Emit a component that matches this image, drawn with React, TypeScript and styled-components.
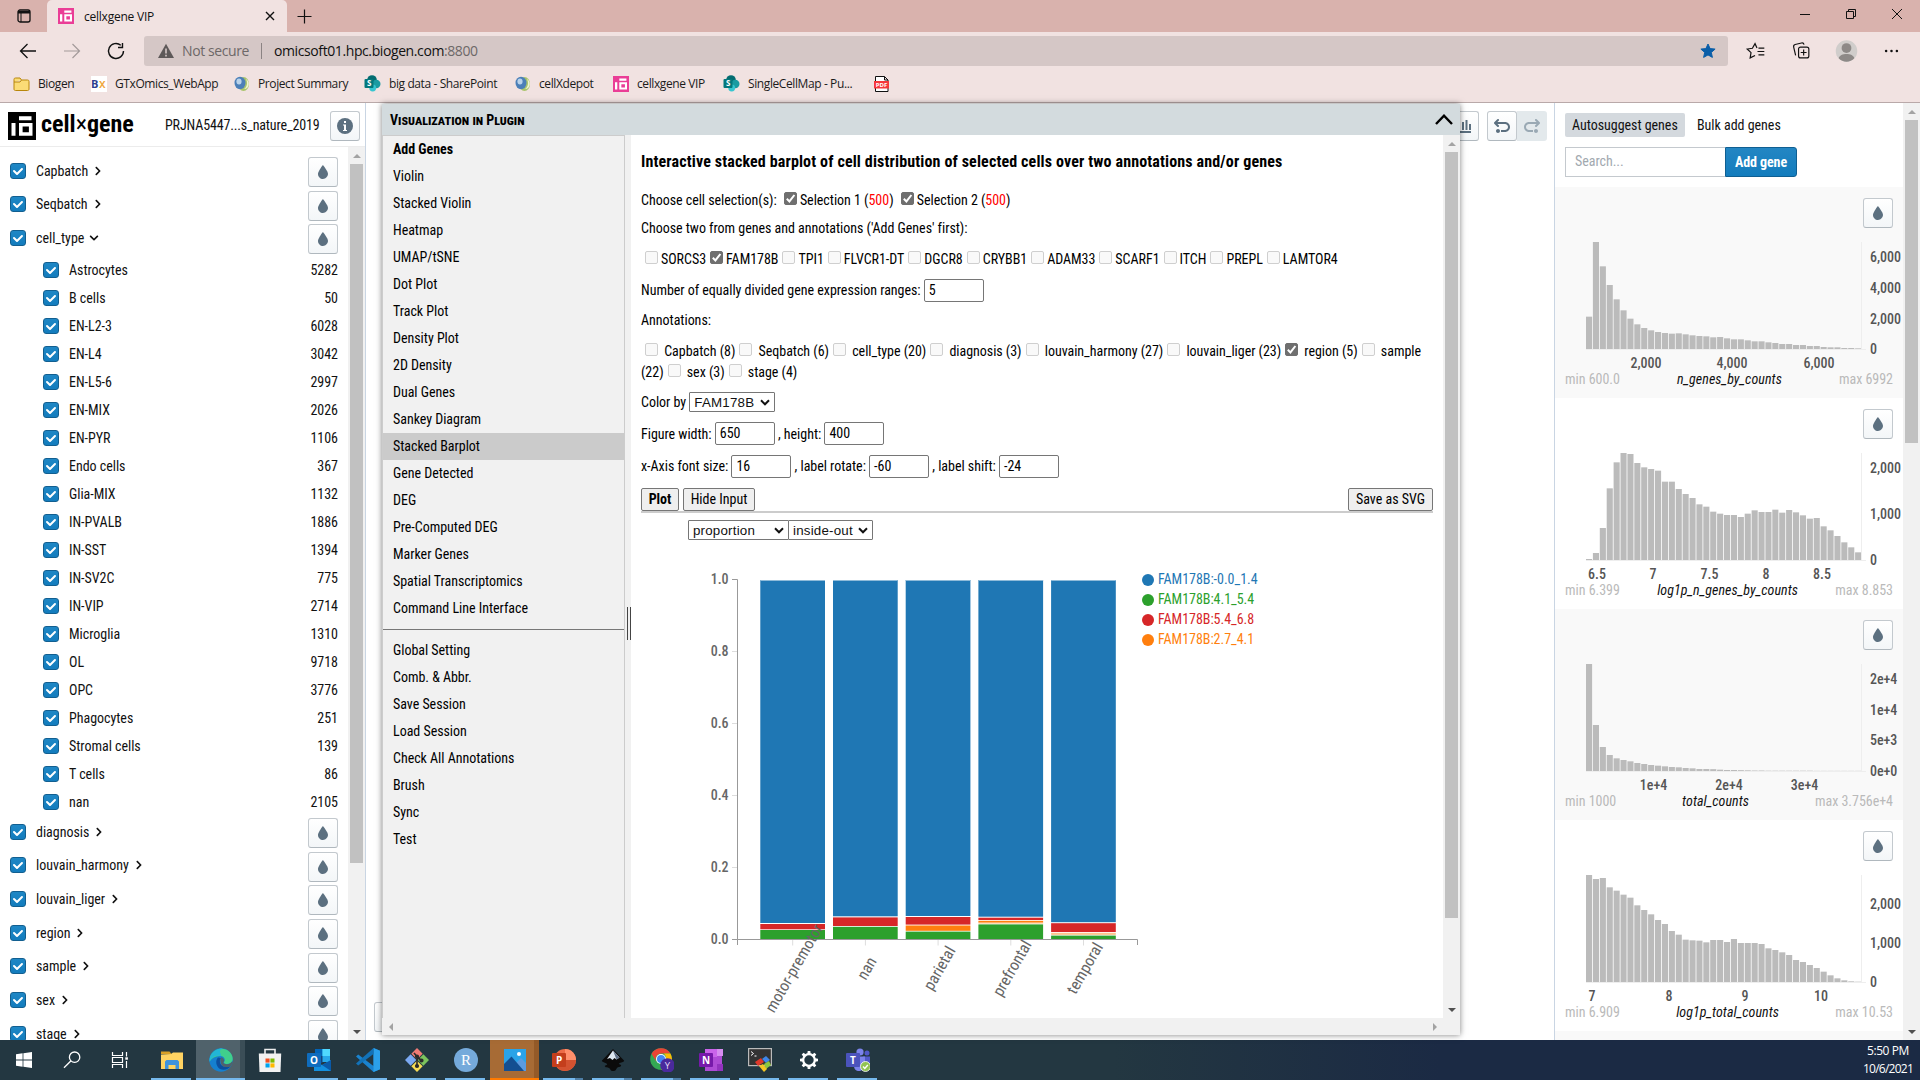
import React from 'react';
import styled, { createGlobalStyle, css } from 'styled-components';
import { FaChevronRight, FaChevronDown } from 'react-icons/fa';

const Global = createGlobalStyle`
  * { box-sizing: border-box; }
  body { margin: 0; overflow: hidden; background: #fff; }
  svg { display: block; flex: none; }
`;

const ui = `'Open Sans', 'Noto Sans', sans-serif`;
const condensed = `'Roboto Condensed', Roboto, sans-serif`;

const Screen = styled.div`
  width: 1920px;
  height: 1080px;
  display: flex;
  flex-direction: column;
  overflow: hidden;
  color: #111;
  font: 14px ${condensed};
  letter-spacing: -0.03px;
  white-space: nowrap;
`;

/* ---------- Browser chrome ---------- */

const TabStrip = styled.div`
  height: 32px;
  display: flex;
  background: #d9b2ad;
  font: 12px ${ui};
`;
const TabActions = styled.div`
  width: 47px;
  display: grid;
  place-items: center;
`;
const Tab = styled.div`
  width: 240px;
  display: flex;
  align-items: center;
  padding: 0 11px;
  background: #f1e2e1;
  border-radius: 5px 5px 0 0;
  letter-spacing: -0.23px;
`;
const TabTitle = styled.span`
  flex: 1;
  margin-left: 10px;
`;
const NewTab = styled.div`
  display: grid;
  place-items: center;
  width: 35px;
`;
const WindowControls = styled.div`
  margin-left: auto;
  display: flex;
  height: 29px;
  & > svg { width: 46px; height: 29px; }
`;
const Toolbar = styled.div`
  height: 37px;
  display: flex;
  align-items: center;
  background: #f1e2e1;
`;
const NavButtons = styled.div`
  width: 144px;
  display: flex;
  padding-left: 6px;
  & > svg { width: 44px; height: 24px; }
`;
const AddressBar = styled.div`
  width: 1584px;
  height: 30px;
  display: flex;
  align-items: center;
  padding: 0 12px 0 14px;
  background: #d5c7c6;
  border-radius: 3px;
  font: 14px ${ui};
  letter-spacing: -0.4px;
  color: #6d6868;
`;
const Security = styled.span`
  width: 79px;
  margin-left: 8px;
`;
const AddressDivider = styled.i`
  width: 1px;
  height: 16px;
  margin-right: 12px;
  background: #8b8383;
`;
const Host = styled.span`
  color: #111;
`;
const StarSlot = styled.span`
  margin-left: auto;
`;
const ToolbarRight = styled.div`
  display: flex;
  padding-left: 6px;
  & > svg { width: 45px; height: 24px; }
`;
const Bookmarks = styled.div`
  height: 34px;
  display: flex;
  align-items: center;
  padding: 0 0 4px 13px;
  background: #f1e2e1;
  border-bottom: 1px solid #b9a9a9;
  font: 12px ${ui};
  letter-spacing: -0.4px;
`;
const Bookmark = styled.div<{ $w: number }>`
  width: ${p => p.$w}px;
  display: flex;
  align-items: center;
  gap: 8px;
  color: #1b1b1b;
`;

/* ---------- Page shell ---------- */

const Page = styled.div`
  height: 937px;
  display: flex;
  background: #fff;
`;
const LeftPanel = styled.aside`
  width: 366px;
  display: flex;
  flex-direction: column;
  border-right: 1px solid #c9d5e3;
`;
const LeftHeader = styled.header`
  height: 44px;
  display: flex;
  align-items: center;
  padding: 2px 5px 0 8px;
  border-bottom: 1px solid #ececec;
`;
const Brand = styled.span`
  width: 124px;
  margin-left: 5px;
  margin-top: -3px;
  font: bold 24px ${condensed};
  letter-spacing: 0;
  color: #000;
`;
const Cross = styled.span`
  font-weight: 400;
`;
const Dataset = styled.span`
  width: 165px;
  margin-top: -1px;
  letter-spacing: -0.14px;
`;
const ScrollArea = styled.div`
  flex: 1;
  min-height: 0;
  display: flex;
`;
const IconButton = styled.button<{ $muted?: boolean }>`
  width: 30px;
  height: 30px;
  flex: none;
  display: grid;
  place-items: center;
  padding: 0;
  border: 1px solid #c3c9ce;
  border-bottom-color: #b0b8be;
  border-radius: 3px;
  background: linear-gradient(#fff, #f3f6f8);
  ${p => p.$muted && css`
    border: 0;
    background: #e3e9ec;
    border-radius: 0 3px 3px 0;
  `}
`;
const Categories = styled.div`
  flex: 1;
  padding: 8.3px 10px 0 10px;
  overflow: hidden;
`;
const CategoryRow = styled.div`
  height: 33.67px;
  display: flex;
  align-items: center;
  & > svg { margin-left: 5px; margin-bottom: 3px; }
`;
const CategoryName = styled.span`
  margin-left: 10px;
  margin-bottom: 3px;
`;
const Push = styled.span`
  flex: 1;
`;
const ValueRow = styled.div`
  height: 28px;
  display: flex;
  align-items: center;
  padding: 0 0 1.4px 33px;
`;
const ValueName = styled.span`
  flex: 1;
  margin-left: 10px;
  padding-top: 1px;
`;
const BlueCheck = styled.span<{ $raised?: boolean }>`
  width: 16px;
  height: 16px;
  flex: none;
  display: block;
  margin-bottom: ${p => (p.$raised ? 3 : 0)}px;
  background: linear-gradient(#1f87c5, #137cbd);
  border: 1px solid #125f90;
  border-radius: 3px;
  & > svg { margin: -1px; }
`;

const Track = styled.div`
  width: 17px;
  flex: none;
  display: flex;
  flex-direction: column;
  align-items: center;
  background: #f1f1f1;
`;
const Thumb = styled.div<{ $h: number }>`
  width: 13px;
  height: ${p => p.$h}px;
  margin-bottom: auto;
  background: #c1c1c1;
`;
const Arrow = styled.i<{ $dir: 'up' | 'down' | 'left' | 'right'; $dark?: boolean }>`
  width: 17px;
  height: 17px;
  flex: none;
  display: grid;
  place-items: center;
  &::before {
    content: '';
    border: 4px solid transparent;
    ${p => p.$dir === 'up' && `border-top-width: 0; border-bottom-color: ${p.$dark ? '#505050' : '#a3a3a3'};`}
    ${p => p.$dir === 'down' && `border-bottom-width: 0; border-top-color: ${p.$dark ? '#505050' : '#a3a3a3'};`}
    ${p => p.$dir === 'left' && `border-left-width: 0; border-right-color: #a3a3a3;`}
    ${p => p.$dir === 'right' && `border-right-width: 0; border-left-color: #a3a3a3;`}
  }
`;

const Stage = styled.main`
  position: relative;
  flex: 1;
  display: flex;
  flex-direction: column;
  justify-content: space-between;
`;
const StageTools = styled.div`
  display: flex;
  justify-content: flex-end;
  padding: 8px 7px 0 0;
`;
const ToolGroup = styled.div`
  display: flex;
  margin-left: 8px;
`;
const StageFooter = styled.div`
  padding: 0 0 8px 8px;
`;

/* ---------- Plugin window ---------- */

const PluginWindow = styled.section`
  position: absolute;
  left: 16px;
  top: 1px;
  width: 1078px;
  height: 931px;
  display: flex;
  flex-direction: column;
  background: #f1f1f1;
  box-shadow: 0 0 6px rgba(0, 0, 0, 0.5);
  color: #000;
`;
const WindowTitle = styled.header`
  height: 31px;
  flex: none;
  display: flex;
  align-items: center;
  justify-content: space-between;
  padding: 0 7px 0 8px;
  background: #d3dbde;
  font: bold 14px ${condensed};
  font-variant: small-caps;
`;
const WindowBody = styled.div`
  height: 883px;
  display: flex;
`;
const Menu = styled.nav`
  width: 243px;
  border: solid #ccc;
  border-width: 1px 1px 0 1px;
`;
const MenuItem = styled.div<{ $active?: boolean; $bold?: boolean }>`
  height: 27px;
  line-height: 27px;
  padding-left: 10px;
  background: ${p => (p.$active ? '#cbcbcb' : 'transparent')};
  font-weight: ${p => (p.$bold ? 700 : 400)};
`;
const MenuRule = styled.hr`
  height: 1px;
  margin: 7px 0;
  border: 0;
  background: #777;
`;
const Splitter = styled.div`
  width: 6px;
  display: flex;
  align-items: center;
  justify-content: flex-end;
  padding-top: 94px;
`;
const Grip = styled.i`
  width: 4px;
  height: 33px;
  border: solid #444;
  border-width: 0 1px;
`;
const Content = styled.div`
  width: 812px;
  padding: 0 10px;
  background: #fff;
  overflow: hidden;
`;
const Heading = styled.h3`
  margin: 0;
  font: bold 16px/53px ${condensed};
  letter-spacing: 0.14px;
`;
const TextLine = styled.div<{ $h: number }>`
  height: ${p => p.$h}px;
  line-height: ${p => p.$h}px;
`;
const FieldLine = styled.div<{ $h: number }>`
  height: ${p => p.$h}px;
  display: flex;
  align-items: center;
  gap: 3.2px;
`;
const AnnotationBlock = styled.div`
  height: 53px;
  padding-top: 6.5px;
  line-height: 21px;
  white-space: normal;
`;
const Box = styled.span<{ $on?: boolean }>`
  display: inline-block;
  width: 13px;
  height: 13px;
  margin: 0 3px 0 4px;
  border-radius: 2px;
  border: 1px solid ${p => (p.$on ? '#6f6f6f' : '#cfcfcf')};
  background: ${p => (p.$on ? '#6f6f6f' : '#f9f9f9')};
  & > svg { margin: -1px; }
`;
const Red = styled.span`
  color: #f00;
`;
const Field = styled.span`
  width: 60px;
  height: 23px;
  flex: none;
  padding-left: 4px;
  border: 1px solid #767676;
  border-radius: 2px;
  background: #fff;
  line-height: 21px;
`;
const Dropdown = styled.span<{ $w: number; $joined?: boolean }>`
  width: ${p => p.$w}px;
  height: 20px;
  flex: none;
  display: flex;
  align-items: center;
  justify-content: space-between;
  padding: 0 4px;
  margin-left: ${p => (p.$joined ? -1 : 0)}px;
  border: 1px solid #767676;
  border-radius: 1px;
  font: 13.33px 'Liberation Sans', Arial, sans-serif;
  letter-spacing: 0.2px;
  color: #111;
  background: #fff;
`;
const Actions = styled.div`
  height: 31px;
  display: flex;
  align-items: flex-end;
  gap: 4px;
  border-bottom: 2px solid #ccc;
`;
const GrayButton = styled.button<{ $w: number; $bold?: boolean }>`
  width: ${p => p.$w}px;
  height: 23px;
  padding: 0 0 1px;
  border: 1px solid #767676;
  border-radius: 2px;
  background: #efefef;
  font: ${p => (p.$bold ? 'bold ' : '')}14px ${condensed};
  color: #000;
`;
const PlotOptions = styled.div`
  height: 27px;
  display: flex;
  align-items: flex-end;
  padding-left: 47px;
`;
const BottomScroll = styled.div`
  height: 17px;
  display: flex;
  justify-content: space-between;
  padding-right: 17px;
`;

/* ---------- Right panel ---------- */

const RightPanel = styled.aside`
  width: 366px;
  display: flex;
  border-left: 1px solid #c9d5e3;
`;
const GeneColumn = styled.div`
  flex: 1;
  overflow: hidden;
`;
const GeneHeader = styled.div`
  height: 84px;
  padding: 10px 0 0 10px;
`;
const ModeTabs = styled.div`
  display: flex;
  align-items: center;
`;
const ModeTab = styled.span<{ $active?: boolean }>`
  height: 24px;
  line-height: 24px;
  width: ${p => (p.$active ? 120 : 100)}px;
  padding-left: ${p => (p.$active ? 7 : 12)}px;
  border-radius: 2px;
  background: ${p => (p.$active ? '#d4d9de' : 'none')};
`;
const SearchRow = styled.div`
  display: flex;
  margin-top: 10px;
`;
const SearchBox = styled.div`
  width: 160px;
  height: 30px;
  padding-left: 9px;
  border: 1px solid #c4c9ce;
  border-right: 0;
  line-height: 27px;
  color: #a2a9af;
`;
const AddGene = styled.button`
  width: 72px;
  height: 30px;
  padding: 0;
  border: 1px solid #0f5f92;
  border-radius: 0 3px 3px 0;
  background: linear-gradient(#2386c3, #137cbd);
  color: #fff;
  font: bold 14px ${condensed};
  letter-spacing: -0.1px;
`;
const HistCard = styled.div<{ $shade?: boolean }>`
  height: 211px;
  padding: 11px 10px 0;
  background: ${p => (p.$shade ? '#f9f9f9' : '#fff')};
`;
const HistTools = styled.div`
  display: flex;
  justify-content: flex-end;
`;
const HistFooter = styled.div`
  display: flex;
  justify-content: space-between;
  line-height: 18px;
  margin-top: -4px;
  color: #bababa;
  & > em { color: #111; letter-spacing: 0.06px; }
`;

/* ---------- Taskbar ---------- */

const Taskbar = styled.footer`
  height: 40px;
  display: flex;
  background: linear-gradient(90deg, #233741 0, #233741 58%, #1b2a44 75%, #1b2a44);
`;
const SystemItems = styled.div`
  width: 147px;
  display: flex;
`;
const TaskItem = styled.div<{ $mark?: 'open' | 'edge' | 'photo' | 'multi' }>`
  width: ${p => (p.$mark ? 49 : 48)}px;
  height: 40px;
  display: grid;
  place-items: center;
  ${p => (p.$mark === 'open') && 'background: linear-gradient(#76b9ed, #76b9ed) 4px 38px / 40px 2px no-repeat;'}
  ${p => (p.$mark === 'multi') && 'background: linear-gradient(90deg, #76b9ed 0 32px, #4f7fa6 32px) 4px 38px / 40px 2px no-repeat;'}
  ${p => (p.$mark === 'edge') && 'background: linear-gradient(#76b9ed, #76b9ed) 0 38px / 49px 2px no-repeat, linear-gradient(90deg, #50626b 0 44px, #3b4e57 44px);'}
  ${p => (p.$mark === 'photo') && 'background: linear-gradient(#ff7a00, #ff7a00) 0 38px / 49px 2px no-repeat, linear-gradient(90deg, #a76b35 0 44px, #945a28 44px);'}
`;
const StoreSlot = styled.div`
  width: 49px;
  display: grid;
  place-items: center;
`;
const Clock = styled.div`
  margin-left: auto;
  width: 64px;
  padding-top: 2px;
  font: 12px/18px ${ui};
  letter-spacing: -0.75px;
  color: #fff;
  text-align: right;
  padding-right: 7px;
`;
const ClockTime = styled.div`
  padding-right: 4px;
  letter-spacing: -0.4px;
`;

/* ---------- Icons ---------- */

const CxgLogo = ({ size = 16, color = '#ea3d96' }: { size?: number; color?: string }) => (
  <svg width={size} height={size} viewBox="0 0 28 28">
    <path fill={color} d="M0 0h28v28H0z" />
    <path fill="#fff" fillRule="evenodd" d="M3.5 11h4v12.7h-4zM11 4.2h12.5v4H11zM11 11h13.5v12.7H11zM14.6 14.6v5.6h6.3v-5.6z" />
  </svg>
);
const Tint = () => (
  <svg width="16" height="16" viewBox="0 0 16 16">
    <path fill="#5c7080" d="M7.88 1s-4.9 6.28-4.9 8.9c.01 2.82 2.34 5.1 4.99 5.1 2.65-.01 5.03-2.3 5.03-5.13C12.99 7.17 7.88 1 7.88 1z" />
  </svg>
);
const Undo = ({ flip }: { flip?: boolean }) => (
  <svg width="16" height="16" viewBox="0 0 16 16">
    <path
      fill={flip ? '#9aa9b4' : '#5c7080'}
      transform={flip ? 'translate(16 0) scale(-1 1)' : undefined}
      d="M4 11c-1.1 0-2 .9-2 2s.9 2 2 2 2-.9 2-2-.9-2-2-2zm7-7H3.41l1.29-1.29c.19-.18.3-.43.3-.71a1.003 1.003 0 00-1.71-.71l-3 3a1.014 1.014 0 000 1.42l3 3a1.003 1.003 0 001.42-1.42L3.41 6H11c1.66 0 3 1.34 3 3s-1.34 3-3 3H7v2h4c2.76 0 5-2.24 5-5s-2.24-5-5-5z"
    />
  </svg>
);
const Tick = () => (
  <svg width="16" height="16" viewBox="0 0 16 16">
    <path fill="#fff" d="M12 5c-.28 0-.53.11-.71.29L7 9.59l-2.29-2.3a1.003 1.003 0 00-1.42 1.42l3 3c.18.18.43.29.71.29s.53-.11.71-.29l5-5A1.003 1.003 0 0012 5z" />
  </svg>
);
const Globe = () => (
  <svg width="16" height="16" viewBox="0 0 16 16">
    <ellipse cx="9.5" cy="8" rx="5.5" ry="7" fill="#a9c46c" />
    <ellipse cx="6" cy="7" rx="5.5" ry="6.2" fill="#4b7fb8" />
    <ellipse cx="5" cy="5.5" rx="2.6" ry="3" fill="#b9d3ea" />
    <path d="M10 13c3-2 4-6 2-10 4 2 4 10-2 10z" fill="#eef3cf" />
  </svg>
);
const SharePoint = () => (
  <svg width="17" height="17" viewBox="0 0 17 17">
    <circle cx="8" cy="5" r="4.8" fill="#036c70" />
    <circle cx="12.3" cy="9" r="4.2" fill="#1a9ba1" />
    <circle cx="8.7" cy="13" r="3.4" fill="#37c6d0" />
    <rect x="0.5" y="4" width="9" height="9" rx="1" fill="#03787c" />
    <text x="5" y="11.4" fontSize="8" fontWeight="700" fill="#fff" textAnchor="middle" fontFamily="Open Sans, sans-serif">S</text>
  </svg>
);

type Mark = 'open' | 'edge' | 'photo' | 'multi' | undefined;
const Letter = ({ x, y, size = 10, children }: { x: number; y: number; size?: number; children: string }) => (
  <text x={x} y={y} fontSize={size} fontWeight="700" fill="#fff" textAnchor="middle" fontFamily="Open Sans, sans-serif">{children}</text>
);

const systemIcons: React.ReactNode[] = [
  <path key="a" fill="#fff" d="M4 6.2l6.6-.9v6.3H4zM11.4 5.2L20 4v7.6h-8.6zM4 12.4h6.6v6.3L4 17.8zM11.4 12.4H20V20l-8.6-1.2z" />,
  <g key="b" fill="none" stroke="#fff" strokeWidth="1.3"><circle cx="14.6" cy="9.2" r="5.2" /><path d="M10.8 13L4 19.8" /></g>,
  <g key="c" fill="none" stroke="#fff" strokeWidth="1.2"><path d="M4.5 4v3.500h10V4M4.500 20v-3.500h10V20M4.500 9.500h10v5h-10zM18.500 4v4.500M18.500 13v7" /><path strokeWidth="2.400" d="M17.300 10.500h2.600" /></g>,
];

const taskIcons: [Mark, React.ReactNode][] = [
  ['open', <g key="d"><path fill="#d9a026" d="M1 3.500h8.500l2 2.500H1z" /><path fill="#ffd362" d="M1 6.500l10-.5 2-1.500h10V21H1z" /><path fill="#3f93dd" d="M5 21v-7.500l1.500-1.500h11l1.500 1.500V21h-3.500v-4h-7v4z" /></g>],
  ['edge', <g key="e">
    <circle cx="12" cy="12" r="11.700" fill="#1580cf" />
    <path fill="#40cf8c" d="M1 9C4 1 12-.500 17 1.500c5 2 7.500 7 6.500 11-1 3.500-5 4.200-8 3-.900-.400-.700-1.200 0-2.200 1-2-.500-5.300-4.500-5.300-4.500-.200-8 2-10 5z" />
    <path fill="#22b5d6" d="M.400 11C3 2 10 0 14 .500 8 2 13 7 12 8 7 7 3 8.500.400 14z" />
    <path fill="#0d4f9e" d="M9 9.500c-3 3-2 9 2 11.500 4 2 9 0 10.500-3-3 1.500-8.500 1-10-2-1-2-.800-4.500.500-6z" />
    <path fill="#50626b" d="M12.300 9.300c2 .500 3.400 2.500 2.500 4.500-.500.900-.500 1.400.200 1.800 3 1.400 6.500.400 8-2l.6 1.500-2 3.400c-3 1-8 1-9.500-2.500-1-2.500-1-5 .2-6.700z" />
  </g>],
  [undefined, <g key="f"><path fill="none" stroke="#eee" strokeWidth="1.600" d="M7 6V1.500h10V6" /><path fill="#f2f2f2" d="M.800 5.500h22.400L22.500 24h-21z" /><path fill="#f25022" d="M7.500 10.500h4.100v4.100H7.500z" /><path fill="#7fba00" d="M12.400 10.500h4.100v4.100h-4.100z" /><path fill="#00a4ef" d="M7.500 15.400h4.100v4.100H7.500z" /><path fill="#ffb900" d="M12.400 15.400h4.100v4.100h-4.100z" /></g>],
  ['open', <g key="g"><path fill="#28a8ea" d="M8 1h15v13H8z" /><path fill="#0364b8" d="M8 1h7.500v7H8z" /><path fill="#14447d" d="M8 8h7.500v7H8z" /><path fill="#50d9ff" d="M15.500 1H23v7h-7.500z" /><path fill="#1490df" d="M7 12l8 5 9-5v11H7z" /><path fill="#0a5aa8" d="M24 12v11l-9-6z" /><rect x="0" y="5" width="14" height="14" rx="1" fill="#0f6cbd" /><Letter x={7} y={15.800}>O</Letter></g>],
  ['open', <g key="h"><path fill="#1a83cf" d="M17.500 0L24 2.800v18.400L17.500 24 0 8.500 2.200 6.500l15.300 11.600z" /><path fill="#2ba0ea" d="M17.500 0L24 2.800v18.400L17.500 24z" /><path fill="#1272b8" d="M17.500 0v6L2.200 17.500 0 15.500z" /></g>],
  ['open', <g key="i"><g transform="rotate(45 12 12)"><rect x="3.500" y="3.500" width="8" height="8" fill="#ef7b76" /><rect x="12.500" y="3.500" width="8" height="8" fill="#7cc35d" /><rect x="3.500" y="12.500" width="8" height="8" fill="#7ba9f2" /><rect x="12.500" y="12.500" width="8" height="8" fill="#f7dc55" /></g><g stroke="#2b2b2b" strokeWidth="1.600" fill="#2b2b2b"><path d="M9 5l3 3.500V19M12 9l4.500 3.500" fill="none" /><circle cx="12" cy="8.500" r="1.300" /><circle cx="16.500" cy="12.500" r="1.300" /><circle cx="12" cy="18" r="1.300" /></g></g>],
  ['open', <g key="j"><circle cx="12" cy="12" r="12" fill="#75aadb" /><text x="12" y="17" fontSize="15" fill="#fff" textAnchor="middle" fontFamily="Liberation Serif, serif">R</text></g>],
  ['photo', <g key="k"><rect x="1" y="1" width="22" height="22" fill="#2aa3e8" /><path fill="#5b9be0" d="M13 15l5-5 5 5v8H13z" /><path fill="#134f91" d="M1 16l7.500-7.500L21 23H1z" /><circle cx="16" cy="6" r="2" fill="#fff" /></g>],
  ['multi', <g key="l"><circle cx="13" cy="12" r="11" fill="#ed6c47" /><path fill="#ff8f6b" d="M13 1a11 11 0 0111 11H13z" /><path fill="#d35230" d="M24 12a11 11 0 01-20 6l9-6z" /><rect x="0" y="5" width="14" height="14" rx="1" fill="#c43e1c" /><Letter x={7} y={15.800}>P</Letter></g>],
  ['multi', <g key="m"><path fill="#0b0b0b" d="M12 1l11 11.500c1 1.500-4 2-5 3s3 1 2 2.500-3 .500-4 2-1 3-4 3-2-2-4-3-3 0-4-1.500 3-1 2-2.500-6-2-5-3.500z" /><path fill="#dfe8f2" d="M12 2.500l6.500 7-3 2-2-1.500-2 2-2.500-2L6 11z" /><path fill="#5d6e85" d="M12 2.500l6.500 7-3 2z" /></g>],
  ['multi', <g key="n"><circle cx="11" cy="11" r="10.800" fill="#34a853" /><path fill="#ea4335" d="M11 .200a10.800 10.800 0 019.400 5.400H11a5.400 5.400 0 00-4.700 8.100L1.600 5.700A10.800 10.800 0 0111 .200z" /><path fill="#fbbc05" d="M20.400 5.600A10.800 10.800 0 0111 21.800l4.700-8.100c1.200-2.500.500-6-2-8.100z" /><circle cx="11" cy="11" r="5" fill="#fff" /><circle cx="11" cy="11" r="4" fill="#4285f4" /><circle cx="17.500" cy="17.500" r="7.300" fill="#4a2a9c" /><text x="17.500" y="21" fontSize="9.500" fill="#e3dcf5" textAnchor="middle" fontFamily="Open Sans, sans-serif">Y</text></g>],
  ['open', <g key="o"><path fill="#ae4bd5" d="M6 1h17v22H6z" /><path fill="#d68df0" d="M18 1h6v7h-6z" /><path fill="#9332bf" d="M18 16h6v7h-6z" /><path fill="#ca64ea" d="M6 1h12v8H6z" /><rect x="0" y="5" width="14" height="14" rx="1" fill="#7719aa" /><Letter x={7} y={15.800}>N</Letter></g>],
  ['open', <g key="p"><rect x="0.600" y="0.600" width="22.800" height="17" fill="#333" stroke="#bbb" strokeWidth="1.200" /><path fill="none" stroke="#fff" d="M3 3.500l2.500 2L3 7.500M6.500 8h2" /><path fill="#e0392b" d="M7 14l6-4 3 4-6 4z" /><path fill="#3f86e8" d="M14 11l4-3 4 4-4 3z" /><path fill="#8cc63f" d="M16 16l5-3 2 4-5 4z" /><path fill="#f3c623" d="M11 18l4-2 4 5-3 3z" /></g>],
  ['open', <g key="q"><circle cx="12" cy="12" r="5.800" fill="none" stroke="#fff" strokeWidth="2.200" />{[0, 45, 90, 135, 180, 225, 270, 315].map(a => <path key={a} fill="#fff" transform={`rotate(${a} 12 12)`} d="M10.300 6l.4-3h2.600l.4 3z" />)}</g>],
  ['open', <g key="r"><circle cx="14" cy="4" r="3.600" fill="#7b83eb" /><circle cx="21" cy="5" r="2.500" fill="#5059c9" /><path fill="#5059c9" d="M17 8.500h7v7c0 3-2 5-5 5z" /><path fill="#7b83eb" d="M8 8.500h11v8c0 4-3 6.500-6 6.500s-5-2-5-5z" /><rect x="0" y="5" width="14" height="14" rx="1" fill="#4b53bc" /><Letter x={7} y={15.800}>T</Letter><circle cx="19.500" cy="18.500" r="5" fill="#92c353" stroke="#fff" strokeWidth="0.800" /><path fill="none" stroke="#fff" strokeWidth="1.400" d="M17 18.600l1.800 1.800 3-3.400" /></g>],
];

/* ---------- Data ---------- */

const cellTypes: [string, number][] = [
  ['Astrocytes', 5282], ['B cells', 50], ['EN-L2-3', 6028], ['EN-L4', 3042], ['EN-L5-6', 2997],
  ['EN-MIX', 2026], ['EN-PYR', 1106], ['Endo cells', 367], ['Glia-MIX', 1132], ['IN-PVALB', 1886],
  ['IN-SST', 1394], ['IN-SV2C', 775], ['IN-VIP', 2714], ['Microglia', 1310], ['OL', 9718],
  ['OPC', 3776], ['Phagocytes', 251], ['Stromal cells', 139], ['T cells', 86], ['nan', 2105],
];
const closedCategories = ['diagnosis', 'louvain_harmony', 'louvain_liger', 'region', 'sample', 'sex', 'stage'];
const plots = [
  'Add Genes', 'Violin', 'Stacked Violin', 'Heatmap', 'UMAP/tSNE', 'Dot Plot', 'Track Plot', 'Density Plot',
  '2D Density', 'Dual Genes', 'Sankey Diagram', 'Stacked Barplot', 'Gene Detected', 'DEG', 'Pre-Computed DEG',
  'Marker Genes', 'Spatial Transcriptomics', 'Command Line Interface',
];
const utilities = ['Global Setting', 'Comb. & Abbr.', 'Save Session', 'Load Session', 'Check All Annotations', 'Brush', 'Sync', 'Test'];
const genes = ['SORCS3', 'FAM178B', 'TPI1', 'FLVCR1-DT', 'DGCR8', 'CRYBB1', 'ADAM33', 'SCARF1', 'ITCH', 'PREPL', 'LAMTOR4'];
const annotations = [
  'Capbatch (8)', 'Seqbatch (6)', 'cell_type (20)', 'diagnosis (3)', 'louvain_harmony (27)',
  'louvain_liger (23)', 'region (5)', 'sample (22)', 'sex (3)', 'stage (4)',
];

const BLUE = '#1f77b4', GREEN = '#2ca02c', RED = '#d62728', ORANGE = '#ff7f0e', PALE = '#fdc58e';
/* Each bar lists its segments from top to bottom as [color, top, bottom] in plot pixels. */
const bars: { name: string; parts: [string, number, number][] }[] = [
  { name: 'motor-premotor', parts: [[BLUE, 40, 383], [RED, 384, 389.3], [GREEN, 390, 399.5]] },
  { name: 'nan', parts: [[BLUE, 40, 376.300], [RED, 377.400, 386], [GREEN, 386.800, 399.500]] },
  { name: 'parietal', parts: [[BLUE, 40, 376], [RED, 377, 384.600], [ORANGE, 385.500, 390.800], [GREEN, 391.600, 399.500]] },
  { name: 'prefrontal', parts: [[BLUE, 40, 376.700], [RED, 377.700, 380], [ORANGE, 380.800, 382.700], [PALE, 382.700, 383.600], [GREEN, 384.400, 399.500]] },
  { name: 'temporal', parts: [[BLUE, 40, 382.200], [RED, 383.200, 392], [PALE, 392.800, 394.900], [GREEN, 395.600, 399.500]] },
];
const legend: [string, string][] = [
  ['FAM178B:-0.0_1.4', BLUE], ['FAM178B:4.1_5.4', GREEN], ['FAM178B:5.4_6.8', RED], ['FAM178B:2.7_4.1', ORANGE],
];

interface Hist {
  name: string; min: string; max: string;
  heights: number[];
  x: [string, number][];
  y: [string, number][];
}
const hists: Hist[] = [
  {
    name: 'n_genes_by_counts', min: 'min 600.0', max: 'max 6992',
    heights: [97, 321, 248, 192, 149, 116, 91, 74, 63, 56, 51, 48, 46, 47, 44, 41, 39, 38, 35, 36, 32, 29, 29, 26, 23, 23, 20, 18, 15, 15, 12, 12, 9, 9, 6, 5, 5, 3, 3, 2],
    x: [['2,000', 81], ['4,000', 167], ['6,000', 254]],
    y: [['6,000', 92], ['4,000', 61], ['2,000', 30.500], ['0', 0]],
  },
  {
    name: 'log1p_n_genes_by_counts', min: 'min 6.399', max: 'max 8.853',
    heights: [3, 21, 96, 215, 293, 321, 318, 291, 278, 273, 268, 235, 235, 213, 198, 186, 167, 160, 145, 139, 135, 135, 129, 139, 149, 144, 144, 151, 142, 150, 143, 134, 124, 126, 101, 89, 72, 53, 38, 23],
    x: [['6.5', 32], ['7', 88], ['7.5', 144.500], ['8', 201], ['8.5', 257]],
    y: [['2,000', 92], ['1,000', 46], ['0', 0]],
  },
  {
    name: 'total_counts', min: 'min 1000', max: 'max 3.756e+4',
    heights: [321, 138, 72, 48, 38, 33, 29, 24, 21, 18, 16, 14, 12, 11, 9, 8, 6, 6, 5.500, 4, 3, 3, 2.500, 2, 1.500, 1.500, 1, 1, 1, 1, 1, 1, 1, 0.500, 0.500, 0.500, 0.500, 0.500, 0.500, 0.500],
    x: [['1e+4', 88.500], ['2e+4', 164], ['3e+4', 239.500]],
    y: [['2e+4', 92], ['1e+4', 61], ['5e+3', 31], ['0e+0', 0]],
  },
  {
    name: 'log1p_total_counts', min: 'min 6.909', max: 'max 10.53',
    heights: [321, 309, 312, 284, 274, 262, 253, 230, 216, 203, 186, 174, 153, 142, 127, 125, 124, 119, 126, 126, 120, 129, 117, 117, 117, 114, 101, 96, 89, 81, 66, 60, 51, 42, 31, 20, 11, 5, 2, 1],
    x: [['7', 27], ['8', 104], ['9', 180], ['10', 256]],
    y: [['2,000', 78], ['1,000', 39], ['0', 0]],
  },
];

/* ---------- Pieces ---------- */

const Category = ({ name, open }: { name: string; open?: boolean }) => (
  <CategoryRow>
    <BlueCheck $raised><Tick /></BlueCheck>
    <CategoryName>{name}</CategoryName>
    {open ? <FaChevronDown size={10} /> : <FaChevronRight size={10} />}
    <Push />
    <IconButton><Tint /></IconButton>
  </CategoryRow>
);

const Scrollbar = ({ thumb, dark = true }: { thumb: number; dark?: boolean }) => (
  <Track>
    <Arrow $dir="up" />
    <Thumb $h={thumb} />
    <Arrow $dir="down" $dark={dark} />
  </Track>
);

const Check = ({ on }: { on?: boolean }) => (
  <Box $on={on}>
    {on && <svg width="13" height="13" viewBox="0 0 13 13"><path fill="none" stroke="#fff" strokeWidth="2" d="M2.800 6.800l2.600 2.600 5-6.400" /></svg>}
  </Box>
);

const Caret = () => (
  <svg width="10" height="7" viewBox="0 0 10 7"><path fill="none" stroke="#111" strokeWidth="2" d="M1 1.300l4 4 4-4" /></svg>
);

const BarPlot = () => (
  <svg width="792" height="478" viewBox="0 0 792 478" fontFamily="Roboto Condensed, sans-serif">
    {bars.map((bar, i) => (
      <g key={bar.name}>
        {bar.parts.map(([color, top, bottom], k) => (
          <rect key={k} x={119.300 + i * 72.700} y={top} width={64.700} height={bottom - top} fill={color} />
        ))}
        <rect x={119.300 + i * 72.700} y={40} width={64.700} height={1} fill="#8fbbd9" />
      </g>
    ))}
    <path fill="none" stroke="#999" d="M91 39.500h5.500v360h-5.500" />
    <path fill="none" stroke="#999" d="M96.500 405v-5.500h400v5.500" />
    <path stroke="#ddd" d="M91 111.500h5M91 183.500h5M91 255.500h5M91 327.500h5" />
    {bars.map((bar, i) => {
      const cx = 151.700 + i * 72.700;
      return (
        <g key={bar.name}>
          <path stroke="#ddd" d={`M${cx} 400v5.500`} />
          <text transform={`translate(${cx + 6} 431) rotate(-60)`} textAnchor="middle" fontSize="16" fill="#666">{bar.name}</text>
        </g>
      );
    })}
    {['1.0', '0.8', '0.6', '0.4', '0.2', '0.0'].map((t, i) => (
      <text key={t} x="87.500" y={44 + i * 72} textAnchor="end" fontSize="14" fontWeight="500" fill="#666">{t}</text>
    ))}
    {legend.map(([label, color], i) => (
      <g key={label} fill={color}>
        <circle cx="507" cy={40 + i * 20} r="6" />
        <text x="517" y={43.500 + i * 20} fontSize="14">{label}</text>
      </g>
    ))}
  </svg>
);

const Histogram = ({ hist }: { hist: Hist }) => (
  <svg width="338" height="146" viewBox="0 0 338 146" fontFamily="Roboto Condensed, sans-serif" fontSize="14" fontWeight="500" fill="#555">
    {hist.heights.map((h, i) => (
      <rect key={i} x={21 + i * 6.900} y={121 - h / 3} width={6.100} height={h / 3} fill="#bbb" />
    ))}
    <path stroke="#eee" fill="none" d="M21 121.500h280M296.500 14v107" />
    {hist.y.map(([t, v]) => <text key={t} x="305" y={126 - v}>{t}</text>)}
    {hist.x.map(([t, v]) => <text key={t} x={v} y="140" textAnchor="middle">{t}</text>)}
  </svg>
);

export default function App() {
  return (
    <Screen>
      <Global />
      <TabStrip>
        <TabActions>
          <svg width="16" height="16" viewBox="0 0 16 16"><rect x="2" y="2" width="12" height="12" rx="2" fill="none" stroke="#111" strokeWidth="1.300" /><path d="M2 3h12v2.500H2z" fill="#111" /><path stroke="#111" d="M5 5v9" /></svg>
        </TabActions>
        <Tab>
          <CxgLogo />
          <TabTitle>cellxgene VIP</TabTitle>
          <svg width="12" height="12" viewBox="0 0 12 12"><path stroke="#111" strokeWidth="1.400" d="M2 2l8 8M10 2l-8 8" /></svg>
        </Tab>
        <NewTab>
          <svg width="15" height="15" viewBox="0 0 15 15"><path stroke="#111" strokeWidth="1.200" d="M7.500 .5v14M.5 7.500h14" /></svg>
        </NewTab>
        <WindowControls>
          <svg viewBox="0 0 46 29"><path stroke="#111" d="M18 14.500h10" /></svg>
          <svg viewBox="0 0 46 29"><path fill="none" stroke="#111" d="M18.500 11.500h7v7h-7zM20.500 11.500v-2h7v7h-2" /></svg>
          <svg viewBox="0 0 46 29"><path stroke="#111" d="M18 9l10 10M28 9L18 19" /></svg>
        </WindowControls>
      </TabStrip>

      <Toolbar>
        <NavButtons>
          <svg viewBox="0 0 44 24" fill="none" stroke="#111" strokeWidth="1.300"><path d="M30 12H14.500M21.500 5l-7 7 7 7" /></svg>
          <svg viewBox="0 0 44 24" fill="none" stroke="#a39a9a" strokeWidth="1.200"><path d="M14 12h15.500M22.500 5l7 7-7 7" /></svg>
          <svg viewBox="0 0 44 24" fill="none" stroke="#111" strokeWidth="1.400"><path d="M29.500 12a7.500 7.500 0 11-2.700-5.800M28.500 4v4.500H24" /></svg>
        </NavButtons>
        <AddressBar>
          <svg width="16" height="16" viewBox="0 0 16 16"><path fill="#5e5959" d="M8 .8L16 15H0z" /><path stroke="#d5c7c6" strokeWidth="1.600" d="M8 5.500v5M8 11.800v1.600" /></svg>
          <Security>Not secure</Security>
          <AddressDivider />
          <Host>omicsoft01.hpc.biogen.com</Host>:8800
          <StarSlot>
            <svg width="16" height="16" viewBox="0 0 16 16"><path fill="#0a5ea8" stroke="#0a5ea8" strokeLinejoin="round" d="M8 1l2.100 4.600 5 .5-3.800 3.300 1.100 5L8 11.900l-4.400 2.500 1.100-5L.900 6.100l5-.5z" /></svg>
          </StarSlot>
        </AddressBar>
        <ToolbarRight>
          <svg viewBox="0 0 46 24" fill="none" stroke="#111" strokeWidth="1.200"><path d="M21.500 16.500l-5 2.500.9-5.300-3.900-3.700 5.300-.8L21.500 4.500 23.500 9M25 9h6M24 12.500h7M25 16h6" /></svg>
          <svg viewBox="0 0 46 24" fill="none" stroke="#111" strokeWidth="1.200"><rect x="20" y="8" width="10.500" height="11" rx="2" /><path d="M25.200 10.500v6M22.200 13.500h6M17 16.500l-2-8.500c-.3-1.500.3-2.300 1.500-2.600l6.500-1.600c1.500-.3 2.300.2 2.600 1.700" /></svg>
          <svg viewBox="0 0 46 24"><circle cx="23" cy="12" r="11" fill="#d0cdcb" /><circle cx="23" cy="9" r="5" fill="#8d8987" /><path fill="#8d8987" d="M15 19.500c1-6 15-6 16 0-4 4.600-12 4.600-16 0z" /></svg>
          <svg viewBox="0 0 46 24" fill="#111"><circle cx="17.500" cy="12" r="1.300" /><circle cx="23" cy="12" r="1.300" /><circle cx="28.500" cy="12" r="1.300" /></svg>
        </ToolbarRight>
      </Toolbar>

      <Bookmarks>
        <Bookmark $w={78}>
          <svg width="17" height="16" viewBox="0 0 17 16"><path fill="#fbdc76" stroke="#b8860b" d="M1 3.500c0-1 .5-1.500 1.500-1.500H7l1.500 2h6c1 0 1.500.5 1.500 1.500v7.500c0 1-.5 1.500-1.500 1.500h-12c-1 0-1.500-.5-1.500-1.500zM1 6h6l1.500-2" /></svg>
          Biogen
        </Bookmark>
        <Bookmark $w={143}>
          <svg width="16" height="16" viewBox="0 0 16 16"><path fill="#fff" d="M0 0h16v16H0z" /><text x="0" y="12" fontSize="11" fontWeight="700" fill="#2d3f8f" fontFamily="Open Sans, sans-serif">B</text><text x="8" y="12" fontSize="12" fontWeight="600" fill="#efa640" fontFamily="Open Sans, sans-serif">x</text></svg>
          GTxOmics_WebApp
        </Bookmark>
        <Bookmark $w={130}><Globe /> Project Summary</Bookmark>
        <Bookmark $w={151}><SharePoint /> big data - SharePoint</Bookmark>
        <Bookmark $w={98}><Globe /> cellXdepot</Bookmark>
        <Bookmark $w={110}><CxgLogo /> cellxgene VIP</Bookmark>
        <Bookmark $w={151}><SharePoint /> SingleCellMap - Pu...</Bookmark>
        <Bookmark $w={20}>
          <svg width="16" height="16" viewBox="0 0 16 16"><path fill="#fff" stroke="#111" d="M1.500.5h9l3.500 3.500v11.500H1.500zM10.500.5V4H14" /><path fill="#f6383b" d="M0 5h15v7.500H0z" /><text x="7.500" y="11" fontSize="6" fontWeight="700" fill="#fff" textAnchor="middle" fontFamily="Open Sans, sans-serif" letterSpacing="0">PDF</text></svg>
        </Bookmark>
      </Bookmarks>

      <Page>
        <LeftPanel>
          <LeftHeader>
            <CxgLogo size={28} color="#000" />
            <Brand>cell<Cross>×</Cross>gene</Brand>
            <Dataset>PRJNA5447...s_nature_2019</Dataset>
            <IconButton>
              <svg width="16" height="16" viewBox="0 0 16 16"><circle cx="8" cy="8" r="8" fill="#5c7080" /><path fill="#fff" d="M7 3h2v2H7zM6 6.500h3V12h1v1H6v-1h1V7.500H6z" /></svg>
            </IconButton>
          </LeftHeader>
          <ScrollArea>
            <Categories>
              <Category name="Capbatch" />
              <Category name="Seqbatch" />
              <Category name="cell_type" open />
              {cellTypes.map(([name, count]) => (
                <ValueRow key={name}>
                  <BlueCheck><Tick /></BlueCheck>
                  <ValueName>{name}</ValueName>
                  <span>{count}</span>
                </ValueRow>
              ))}
              {closedCategories.map(name => <Category key={name} name={name} />)}
            </Categories>
            <Scrollbar thumb={699} />
          </ScrollArea>
        </LeftPanel>

        <Stage>
          <StageTools>
            <IconButton>
              <svg width="16" height="16" viewBox="0 0 16 16" fill="#5c7080"><path d="M1 13h14v2H1zM2 7h2v5H2zM6 4h2v8H6zM9.500 2h2v10h-2zM13 6h2v6h-2z" /></svg>
            </IconButton>
            <ToolGroup>
              <IconButton><Undo /></IconButton>
              <IconButton $muted><Undo flip /></IconButton>
            </ToolGroup>
          </StageTools>
          <StageFooter><IconButton /></StageFooter>

          <PluginWindow>
            <WindowTitle>
              Visualization in Plugin
              <svg width="18" height="11" viewBox="0 0 18 11"><path fill="none" stroke="#000" strokeWidth="2.400" d="M1 10l8-8.300L17 10" /></svg>
            </WindowTitle>
            <WindowBody>
              <Menu>
                {plots.map((name, i) => (
                  <MenuItem key={name} $bold={i === 0} $active={name === 'Stacked Barplot'}>{name}</MenuItem>
                ))}
                <MenuRule />
                {utilities.map(name => <MenuItem key={name}>{name}</MenuItem>)}
              </Menu>
              <Splitter><Grip /></Splitter>
              <Content>
                <Heading>Interactive stacked barplot of cell distribution of selected cells over two annotations and/or genes</Heading>
                <TextLine $h={24}>
                  Choose cell selection(s): <Check on />Selection 1 (<Red>500</Red>) <Check on />Selection 2 (<Red>500</Red>)
                </TextLine>
                <TextLine $h={32}>Choose two from genes and annotations ('Add Genes' first):</TextLine>
                <TextLine $h={30}>
                  {genes.map(g => <React.Fragment key={g}><Check on={g === 'FAM178B'} />{g}</React.Fragment>)}
                </TextLine>
                <FieldLine $h={32}>Number of equally divided gene expression ranges:<Field>5</Field></FieldLine>
                <TextLine $h={28}>Annotations:</TextLine>
                <AnnotationBlock>
                  {annotations.map(a => <React.Fragment key={a}><Check on={a === 'region (5)'} /> {a}</React.Fragment>)}
                </AnnotationBlock>
                <FieldLine $h={30}>Color by<Dropdown $w={86}>FAM178B<Caret /></Dropdown></FieldLine>
                <FieldLine $h={33}>Figure width:<Field>650</Field>, height:<Field>400</Field></FieldLine>
                <FieldLine $h={32}>x-Axis font size:<Field>16</Field>, label rotate:<Field>-60</Field>, label shift:<Field>-24</Field></FieldLine>
                <Actions>
                  <GrayButton $w={38} $bold>Plot</GrayButton>
                  <GrayButton $w={72}>Hide Input</GrayButton>
                  <Push />
                  <GrayButton $w={85}>Save as SVG</GrayButton>
                </Actions>
                <PlotOptions>
                  <Dropdown $w={101}>proportion<Caret /></Dropdown>
                  <Dropdown $w={85} $joined>inside-out<Caret /></Dropdown>
                </PlotOptions>
                <BarPlot />
              </Content>
              <Scrollbar thumb={766} />
            </WindowBody>
            <BottomScroll>
              <Arrow $dir="left" />
              <Arrow $dir="right" />
            </BottomScroll>
          </PluginWindow>
        </Stage>

        <RightPanel>
          <GeneColumn>
            <GeneHeader>
              <ModeTabs>
                <ModeTab $active>Autosuggest genes</ModeTab>
                <ModeTab>Bulk add genes</ModeTab>
              </ModeTabs>
              <SearchRow>
                <SearchBox>Search...</SearchBox>
                <AddGene>Add gene</AddGene>
              </SearchRow>
            </GeneHeader>
            {hists.map((hist, i) => (
              <HistCard key={hist.name} $shade={i % 2 === 0}>
                <HistTools><IconButton><Tint /></IconButton></HistTools>
                <Histogram hist={hist} />
                <HistFooter><span>{hist.min}</span><em>{hist.name}</em><span>{hist.max}</span></HistFooter>
              </HistCard>
            ))}
            <HistCard $shade />
          </GeneColumn>
          <Scrollbar thumb={323} />
        </RightPanel>
      </Page>

      <Taskbar>
        <SystemItems>
          {systemIcons.map((icon, i) => (
            <TaskItem key={i}><svg width="24" height="24" viewBox="0 0 24 24">{icon}</svg></TaskItem>
          ))}
        </SystemItems>
        {taskIcons.map(([mark, icon], i) => {
          const glyph = <svg width="24" height="24" viewBox="0 0 24 24">{icon}</svg>;
          return mark ? <TaskItem key={i} $mark={mark}>{glyph}</TaskItem> : <StoreSlot key={i}>{glyph}</StoreSlot>;
        })}
        <Clock>
          <ClockTime>5:50 PM</ClockTime>
          10/6/2021
        </Clock>
      </Taskbar>
    </Screen>
  );
}
